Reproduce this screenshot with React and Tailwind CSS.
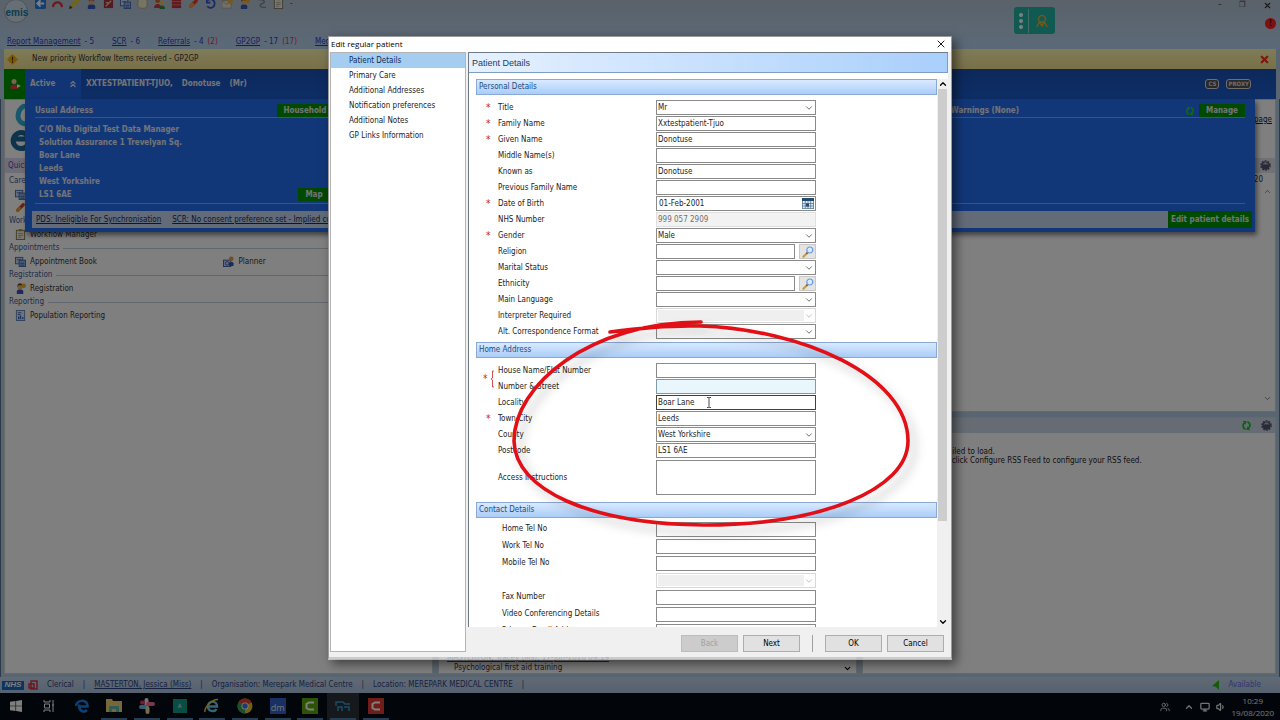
import React from "react";
import { ChevronDown, ChevronUp, ChevronsUp, X, Monitor, Volume1, Users } from "lucide-react";

const QUICK_LINKS = [
  { name: "Report Management", count: "5" },
  { name: "SCR", count: "6" },
  { name: "Referrals", count: "4", urgent: "(2)" },
  { name: "GP2GP", count: "17", urgent: "(17)" },
  { name: "Medicine Management", count: "2" },
];

const NAV = [
  "Patient Details",
  "Primary Care",
  "Additional Addresses",
  "Notification preferences",
  "Additional Notes",
  "GP Links Information",
];

const PERSONAL = [
  { id: "title", label: "Title", required: true, kind: "select", value: "Mr" },
  { id: "family", label: "Family Name", required: true, value: "Xxtestpatient-Tjuo" },
  { id: "given", label: "Given Name", required: true, value: "Donotuse" },
  { id: "middle", label: "Middle Name(s)", value: "" },
  { id: "known", label: "Known as", value: "Donotuse" },
  { id: "previous", label: "Previous Family Name", value: "" },
  { id: "dob", label: "Date of Birth", required: true, kind: "date", value: "01-Feb-2001" },
  { id: "nhs", label: "NHS Number", kind: "readonly", value: "999 057 2909" },
  { id: "gender", label: "Gender", required: true, kind: "select", value: "Male" },
  { id: "religion", label: "Religion", kind: "search", value: "" },
  { id: "marital", label: "Marital Status", kind: "select", value: "" },
  { id: "ethnicity", label: "Ethnicity", kind: "search", value: "" },
  { id: "language", label: "Main Language", kind: "select", value: "" },
  { id: "interpreter", label: "Interpreter Required", kind: "select", value: "", disabled: true },
  { id: "format", label: "Alt. Correspondence Format", kind: "select", value: "" },
];

const ADDRESS = [
  { id: "locality", label: "Locality", value: "Boar Lane", active: true },
  { id: "town", label: "Town City", required: true, value: "Leeds" },
  { id: "county", label: "County", kind: "select", value: "West Yorkshire" },
  { id: "postcode", label: "Postcode", value: "LS1 6AE" },
];

const CONTACT = [
  { id: "home-tel", label: "Home Tel No", value: "" },
  { id: "work-tel", label: "Work Tel No", value: "" },
  { id: "mobile-tel", label: "Mobile Tel No", value: "" },
  { id: "mobile-use", label: "", kind: "select", value: "", disabled: true },
  { id: "fax", label: "Fax Number", value: "" },
  { id: "video", label: "Video Conferencing Details", value: "" },
  { id: "email", label: "Primary Email Address", value: "" },
];

function CalendarIcon() {
  return (
    <svg viewBox="0 0 12 11" className="size-full">
      <rect x="0" y="0" width="12" height="11" fill="#dfe9f2" />
      <rect x="0" y="0" width="12" height="3" fill="#24496f" />
      <path d="M.5 3v8M3.3 3v8M6 3v8M8.7 3v8M11.5 3v8M0 5.5h12M0 8h12M0 10.6h12" stroke="#55789a" strokeWidth=".8" />
      <rect x="4" y="5.5" width="3" height="3" fill="#24496f" />
    </svg>
  );
}

function MagnifierIcon() {
  return (
    <svg viewBox="0 0 12 12" className="size-3">
      <path d="M1.4 10.8 5.2 7" stroke="#c79a4b" strokeWidth="2.2" strokeLinecap="round" />
      <path d="M4.4 7.8 5.6 6.6" stroke="#555f78" strokeWidth="1.6" />
      <circle cx="7.8" cy="4" r="3" fill="#d8ebff" stroke="#6d9bdc" strokeWidth="1.2" />
    </svg>
  );
}

function SyncIcon({ className }) {
  return (
    <svg viewBox="0 0 12 12" className={className}>
      <path d="M5 10C1.500 9 1.500 4.500 4 3M7 2c3.500 1 3.500 5.500 1 7" fill="none" stroke="currentColor" strokeWidth="2" />
      <path d="M2 .8 6.300 1.300 4.800 5.200zM10 11.200 5.700 10.700 7.200 6.800z" fill="currentColor" />
    </svg>
  );
}

function GearIcon() {
  return (
    <svg viewBox="0 0 12 12" className="size-[11px]">
      <circle cx="6" cy="6" r="4.500" fill="#50566c" />
      <circle cx="6" cy="6" r="5" fill="none" stroke="#50566c" strokeWidth="1.600" strokeDasharray="2 1.140" />
      <path d="M3.500 5c0-2 5-2 5 0M4.500 3v2M6 2.500V5M7.500 3v2" fill="none" stroke="#c8ccdc" strokeWidth=".8" />
    </svg>
  );
}

function SelectBox({ id, label, value, disabled }) {
  return (
    <div className={`relative h-[15px] w-40 border ${disabled ? "border-[#d8d8d8] bg-white p-px" : "border-[#8a8a8a] bg-white"}`}>
      <select
        id={id}
        aria-label={label || "Contact preference"}
        disabled={disabled}
        defaultValue={value}
        className={`block h-full appearance-none border-0 pl-px leading-3 text-[#222] outline-none ${disabled ? "w-[146px] bg-[#efefef]" : "w-full bg-transparent"}`}
      >
        <option value={value}>{value}</option>
      </select>
      <ChevronDown className={`pointer-events-none absolute right-px top-[2px] size-[10px] ${disabled ? "text-[#b5b5b5]" : "text-[#555]"}`} />
    </div>
  );
}

function Control({ field }) {
  const { id, label, kind, value, disabled, active, tint } = field;
  if (kind === "select") return <SelectBox id={id} label={label} value={value} disabled={disabled} />;
  if (kind === "search")
    return (
      <div className="flex h-[15px] w-40 justify-between">
        <input id={id} defaultValue={value} className="h-[15px] w-[139px] border border-[#8a8a8a] bg-white px-px outline-none" />
        <button type="button" aria-label={`Find ${label}`} className="flex h-[15px] w-[17px] items-center justify-center border border-[#c8c8c8] bg-[#e4e4e4]">
          <MagnifierIcon />
        </button>
      </div>
    );
  if (kind === "date")
    return (
      <div className="flex h-[15px] w-40 items-center border border-[#8a8a8a] bg-white pr-px">
        <input id={id} defaultValue={value} className="h-full min-w-0 flex-1 bg-transparent px-[2px] outline-none" />
        <button type="button" aria-label="Open calendar" className="h-[11px] w-3">
          <CalendarIcon />
        </button>
      </div>
    );
  const look =
    kind === "readonly"
      ? "border-[#e0e0e0] bg-[#f2f2f2] text-[#707070]"
      : tint
        ? "border-[#7f9aa8] bg-[#e9f7fd]"
        : active
          ? "border-[#404040] bg-white"
          : "border-[#8a8a8a] bg-white";
  return <input id={id} readOnly={kind === "readonly"} defaultValue={value} className={`block h-[15px] w-40 border px-px outline-none ${look}`} />;
}

function Row({ field }) {
  return (
    <div className="flex h-[15px] items-center">
      <span className="w-[22px] pl-[10px] text-[10px] leading-none text-[#c22]">{field.required ? "*" : ""}</span>
      <label htmlFor={field.id} className="w-[158px] whitespace-nowrap">
        {field.label}
      </label>
      <Control field={field} />
    </div>
  );
}

function SectionTitle({ children }) {
  return (
    <h3 className="flex h-4 items-center border border-[#8aa9d6] bg-linear-to-b from-[#d9eaff] to-[#aacdf8] px-[2px] text-[#1d4c7c]">
      {children}
    </h3>
  );
}

const RING =
  "M610 332C640 328 668 325 700 326C800 329 908 375 908 441C908 490 820 525 704 525C590 524 515 490 514 441C514 385 590 322 701 322";

function RingMark() {
  return (
    <svg viewBox="329 37 622 620" className="pointer-events-none absolute inset-0 size-full overflow-visible" fill="none" strokeLinecap="round" strokeLinejoin="round">
      <defs>
        <filter id="soft" x="-10%" y="-10%" width="125%" height="125%">
          <feGaussianBlur stdDeviation="5" />
        </filter>
      </defs>
      <path d={RING} stroke="#000" strokeOpacity=".14" strokeWidth="6" filter="url(#soft)" transform="translate(6 7)" />
      <path d={RING} stroke="#e21016" strokeWidth="3.600" />
    </svg>
  );
}

function Dialog() {
  return (
    <section
      role="dialog"
      aria-label="Edit regular patient"
      className="relative flex w-full max-w-[624px] flex-col border border-b-[3px] border-[#9a9a9a] border-b-white/60 bg-[#f0f0f0] bg-clip-padding pb-[5px] shadow-[4px_4px_10px_rgba(0,0,0,0.5)]"
    >
      <header className="flex h-[15px] shrink-0 items-center justify-between bg-white pb-[2px] pl-[2px] pr-1">
        <h1 className="font-['Open_Sans',sans-serif] text-black">Edit regular patient</h1>
        <button type="button" aria-label="Close" className="text-black">
          <X className="size-[12px]" strokeWidth={1.8} />
        </button>
      </header>
      <div className="flex min-h-0 flex-1 gap-[2px] pl-px pr-[3px]">
        <nav className="w-[136px] shrink-0 border border-[#b4b4b4] bg-white">
          <ul>
            {NAV.map((item, i) => (
              <li key={item}>
                <button
                  type="button"
                  className={`flex h-[15px] w-full items-center pl-[18px] ${i === 0 ? "bg-[#a5cdf0] text-[#0c2f5c]" : "text-[#222]"}`}
                >
                  {item}
                </button>
              </li>
            ))}
          </ul>
        </nav>
        <div className="flex min-w-0 flex-1 flex-col">
          <div className="flex min-h-0 flex-1 flex-col border-l border-t border-[#6f7a88] bg-white">
            <h2 className="flex h-5 shrink-0 items-center border-b border-r border-[#7f9cc4] bg-linear-to-r from-[#e6f1ff] to-[#a9cffc] px-[3px] font-['Liberation_Sans',sans-serif] text-[9px] text-[#1e3c64]">
              Patient Details
            </h2>
            <div className="flex min-h-0 flex-1 pt-[6px]">
              <form className="min-w-0 flex-1 overflow-hidden pl-[7px] text-[#222]">
                <SectionTitle>Personal Details</SectionTitle>
                <div className="flex flex-col gap-px pb-[3px] pt-[5px]">
                  {PERSONAL.map((f) => (
                    <Row key={f.id} field={f} />
                  ))}
                </div>
                <SectionTitle>Home Address</SectionTitle>
                <div className="flex flex-col gap-px pb-[7px] pt-[5px]">
                  <div className="flex">
                    <div className="flex w-[22px] items-center pl-[7px] text-[#c22]">
                      <span className="text-[10px] leading-none">*</span>
                      <svg viewBox="0 0 5 18" className="ml-[2px] h-[18px] w-[5px]" fill="none" stroke="#c22">
                        <path d="M4 1H2.5V8L1 9l1.500 1V17H4" strokeWidth=".8" />
                      </svg>
                    </div>
                    <div className="flex flex-col gap-px">
                      <div className="flex h-[15px] items-center">
                        <label htmlFor="house" className="w-[158px]">House Name/Flat Number</label>
                        <Control field={{ id: "house", value: "" }} />
                      </div>
                      <div className="flex h-[15px] items-center">
                        <label htmlFor="street" className="w-[158px]">Number &amp; Street</label>
                        <Control field={{ id: "street", value: "", tint: true }} />
                      </div>
                    </div>
                  </div>
                  {ADDRESS.map((f) => (
                    <Row key={f.id} field={f} />
                  ))}
                  <div className="flex items-center pl-[22px] pt-px">
                    <label htmlFor="access" className="w-[158px]">Access Instructions</label>
                    <textarea id="access" className="block h-[35px] w-40 resize-none border border-[#8a8a8a] bg-white outline-none" />
                  </div>
                </div>
                <SectionTitle>Contact Details</SectionTitle>
                <div className="flex flex-col gap-[2px] pt-1">
                  {CONTACT.map((f) => (
                    <div key={f.id} className="flex h-[15px] items-center pl-[26px]">
                      <label htmlFor={f.id} className="w-[154px] whitespace-nowrap pb-[2px]">{f.label}</label>
                      <Control field={f} />
                    </div>
                  ))}
                </div>
              </form>
              <div className="flex w-[11px] shrink-0 flex-col items-center bg-[#f0f0f0]">
                <ChevronUp className="size-[10px] shrink-0" strokeWidth={3} />
                <div className="h-[432px] w-[9px] bg-[#cdcdcd]" />
                <ChevronDown className="mt-auto size-[10px] shrink-0" strokeWidth={3} />
              </div>
            </div>
          </div>
          <footer className="flex h-[25px] shrink-0 items-end justify-end gap-[5px] pr-1 text-black">
            <button type="button" disabled className="h-[17px] w-[57px] border border-[#bdbdbd] bg-[#cccccc] text-[#a0a0a0]">Back</button>
            <button type="button" className="h-[17px] w-[57px] border border-[#adadad] bg-[#e1e1e1]">Next</button>
            <span className="mx-[7px] h-[17px] border-l border-[#a0a0a0]" />
            <button type="button" className="h-[17px] w-[57px] border border-[#adadad] bg-[#e1e1e1]">OK</button>
            <button type="button" className="h-[17px] w-[57px] border border-[#adadad] bg-[#e1e1e1]">Cancel</button>
          </footer>
        </div>
      </div>
      <RingMark />
      <svg viewBox="0 0 6 11" className="pointer-events-none absolute left-[377px] top-[360px] h-[11px] w-[6px]" fill="none" stroke="#333" strokeWidth=".9">
        <path d="M1 .5h1.500L3 1l.5-.5H5M3 1v9M1 10.500h1.500L3 10l.5.5H5" />
      </svg>
    </section>
  );
}

const ART = {
  back: (
    <>
      <rect width="12" height="12" rx="1.500" fill="#2b7de0" />
      <path d="M10 6H3M6 2.500 2.500 6 6 9.500" fill="none" stroke="#fff" strokeWidth="2" />
    </>
  ),
  arc: <path d="M1 10C2 3 10 3 11 10" fill="none" stroke="#d8343a" strokeWidth="2.500" />,
  pencil: (
    <>
      <path d="M9 0l3 3-8 8-4 1 1-4z" fill="#e8cc20" />
      <path d="M1 8l3 3-4 1z" fill="#444" />
    </>
  ),
  person: (
    <>
      <path d="M2 12V9c0-3 8-3 8 0v3z" fill="#3458b8" />
      <circle cx="6" cy="4" r="3" fill="#e8a878" />
      <path d="M3 4c0-5 6-5 6 0L8 2.500H4z" fill="#604028" />
    </>
  ),
  user: (
    <>
      <path d="M2 12V9c0-3 7-3 7 0v3z" fill="#3458b8" />
      <circle cx="5.500" cy="4" r="3" fill="#f0b070" />
      <path d="M2.500 4c0-5 6-5 6 0L7 2.500H4z" fill="#684020" />
      <circle cx="9.500" cy="3" r="2.500" fill="#f0b020" />
    </>
  ),
  book: (
    <>
      <rect x="1" y="1" width="10" height="10" fill="#a83058" />
      <path d="M3 9 9 3M3 5h3" stroke="#e8c860" strokeWidth="1.500" />
    </>
  ),
  screens: (
    <>
      <rect x=".5" y="1.500" width="8" height="7" fill="#c8dcf4" stroke="#4468b0" />
      <rect x="4.500" y="4.500" width="7" height="7" fill="#8cb0e4" stroke="#4468b0" />
      <path d="M2 4h5M6 8h4M6 10h4" stroke="#3458a0" strokeWidth=".8" />
    </>
  ),
  drum: <path d="M1 3c0-3 10-3 10 0v6c0 3-10 3-10 0z" fill="#ece8cc" stroke="#a89868" strokeWidth=".8" />,
  people: (
    <>
      <circle cx="4" cy="3" r="2.500" fill="#d06028" />
      <circle cx="9" cy="5" r="2.300" fill="#f0c040" />
      <path d="M0 11c0-6 8-6 8 0z" fill="#d03838" />
      <path d="M6 12c0-5 6-5 6 0z" fill="#308848" />
    </>
  ),
  grid: (
    <>
      <rect x="1" y="1" width="10" height="10" fill="#c03038" />
      <path d="M1 4h10M1 7.500h10" stroke="#e0a8a8" strokeWidth=".7" />
    </>
  ),
  pill: (
    <>
      <path d="M3 9 9 3" stroke="#e04020" strokeWidth="3.500" strokeLinecap="round" />
      <path d="M2.800 9.200 5 7" stroke="#e8a030" strokeWidth="3.500" strokeLinecap="round" />
    </>
  ),
  cycle: <path d="M3 2.500C6 0 11 2 10.500 6.500 10 11 5 12 2.500 9M2 1v4h4" fill="none" stroke="#3450c8" strokeWidth="1.800" />,
  clock: (
    <>
      <rect x="0" y="3" width="10" height="8" fill="#e8e0d0" stroke="#9a9480" strokeWidth=".7" />
      <path d="M0 3l5 4 5-4" fill="none" stroke="#9a9480" strokeWidth=".7" />
      <circle cx="9" cy="3.500" r="3" fill="#e8b040" />
    </>
  ),
  squiggle: <path d="M2 2c5-1 10 2 5 4s-2 5 4 4" fill="none" stroke="#808890" strokeWidth="1.500" />,
  clipboard: (
    <>
      <rect x="1.500" y="1.500" width="9" height="10" fill="#f4f0dc" stroke="#807850" />
      <path d="M4 0h4v2.500H4z" fill="#a89858" />
      <path d="M3.500 5h5M3.500 7h5M3.500 9h3" stroke="#9088a0" strokeWidth=".8" />
    </>
  ),
  planner: (
    <>
      <rect x=".5" y="4.500" width="8" height="7" fill="#c8dcf4" stroke="#3c5cb0" />
      <circle cx="4.500" cy="8" r="2" fill="none" stroke="#3c5cb0" />
      <circle cx="9" cy="3" r="2.500" fill="#f09838" />
      <path d="M6.500 11V8c0-2 5-2 5 0v3z" fill="#3458b8" />
    </>
  ),
  report: (
    <>
      <rect x="1.500" y=".5" width="9" height="11" fill="#dce8f8" stroke="#6480b8" />
      <path d="M3 3h4M3 5h3" stroke="#4060a0" />
      <path d="M4 10V7M6 10V6M8.500 10V7.500" stroke="#3068c0" strokeWidth="1.400" />
    </>
  ),
};

const TOOLBAR = ["back", "arc", "pencil", "person", "book", "screens", "drum", "people", "grid", "pill", "cycle", "clock", "user", "squiggle", "clipboard"];

function Glyph({ name }) {
  return (
    <svg viewBox="0 0 12 12" className="size-[11px] shrink-0">
      {ART[name]}
    </svg>
  );
}

function MenuGroup({ title, items }) {
  return (
    <section>
      <h3 className="flex h-[14px] items-center gap-1 text-[#3d5a94]">
        {title}
        <span className="flex-1 border-t border-[#c4cede]" />
      </h3>
      <ul className="grid grid-cols-2 pl-[6px]">
        {items.map((item) => (
          <li key={item.name} className="flex h-[13px] items-center gap-1 text-[#333]">
            <Glyph name={item.icon} />
            {item.name}
          </li>
        ))}
      </ul>
    </section>
  );
}

function GreenButton({ children, className }) {
  return (
    <button type="button" className={`bg-[#009400] font-bold text-[#e4e8f0] ${className}`}>
      {children}
    </button>
  );
}

function PatientBanner() {
  return (
    <div className="relative z-10 mx-1 flex h-[30px] shrink-0 bg-linear-to-b from-[#1a52b4] to-[#1c5cd0] text-[#e4e8f0]">
      <div className="flex w-[21px] items-center justify-center bg-[#009400]">
        <svg viewBox="0 0 12 12" className="size-3">
          <circle cx="5" cy="3.500" r="2.500" fill="#f0c8a0" />
          <path d="M1 11c0-6 8-6 8 0z" fill="#e04040" />
          <path d="M8 6l4 2-4 2z" fill="#fff" />
        </svg>
      </div>
      <div className="flex w-14 items-center justify-between bg-[#2068e8] pl-[5px] pr-[3px] font-bold">
        Active <ChevronsUp className="size-[10px]" strokeWidth={3} />
      </div>
      <div className="flex flex-1 items-center gap-[9px] pl-[5px] font-bold">
        <span>XXTESTPATIENT-TJUO,</span>
        <span>Donotuse</span>
        <span>(Mr)</span>
      </div>
      <div className="flex items-center gap-[7px] pr-[25px] text-[6px] font-bold leading-none text-[#ddd]">
        <span className="rounded-[3px] border border-[#ddd] bg-[#555] px-[2px] py-px">CS</span>
        <span className="rounded-[3px] border border-[#ddd] bg-[#555] px-px py-px">PROXY</span>
      </div>
      <div className="absolute left-[21px] right-[21px] top-full flex h-[133px] flex-col bg-[#246ef2] px-[7px] pb-[4px] shadow-[2px_3px_5px_rgba(0,0,0,0.5)]">
        <div className="mx-[3px] flex h-[19px] items-end border-b border-[#7ba6f0] leading-[13px]">
          <h2 className="w-[242px] font-bold">Usual Address</h2>
          <GreenButton className="h-[13px] w-[56px]">Household</GreenButton>
          <h2 className="ml-auto mr-[166px] font-bold">Warnings (None)</h2>
          <SyncIcon className="mb-px mr-1 size-[10px] text-[#20d020]" />
          <GreenButton className="h-[13px] w-[46px]">Manage</GreenButton>
        </div>
        <div className="mx-[3px] flex flex-1 items-end border-b border-[#7ba6f0] pb-[2px]">
          <address className="w-[263px] pl-1 font-bold not-italic leading-[13px]">
            C/O Nhs Digital Test Data Manager
            <br />
            Solution Assurance 1 Trevelyan Sq.
            <br />
            Boar Lane
            <br />
            Leeds
            <br />
            West Yorkshire
            <br />
            LS1 6AE
          </address>
          <GreenButton className="h-[13px] w-8">Map</GreenButton>
        </div>
        <div className="mt-[7px] flex h-[17px] items-center gap-[11px] bg-[#c6d6f2] pl-[4px] text-[#1c2c50]">
          <a href="#pds" className="underline">PDS: Ineligible For Synchronisation</a>
          <a href="#scr" className="underline">SCR: No consent preference set - Implied consent</a>
          <GreenButton className="-mr-1 ml-auto h-full w-[84px]">Edit patient details</GreenButton>
        </div>
      </div>
    </div>
  );
}

function Workspace() {
  return (
    <main className="flex min-h-0 flex-1 gap-[5px] border-x border-[#5f7590] px-[3px] pb-[3px]">
      <section className="flex min-w-0 flex-[429] flex-col border border-[#d0d0d0] bg-white">
        <div className="h-[58px] shrink-0 pl-[5px] pt-[4px]">
          <svg viewBox="0 0 50 50" className="size-[50px]" fill="none">
            <path d="M26 2A12 12 0 0 0 8 12c0 4 3 8 9 8" stroke="#30b0d8" strokeWidth="5" />
            <path d="M2 35h17a8 8 0 1 0-2 7" stroke="#186898" strokeWidth="5" />
          </svg>
        </div>
        <h2 className="flex h-[15px] shrink-0 items-center bg-[#dcd8ee] pl-[3px] text-[#5a48b0]">Quick Launch</h2>
        <div className="pl-[4px] pt-px">
          <MenuGroup title="Care Record" items={[{ name: "Consultations", icon: "screens" }, { name: "Tasks", icon: "person" }, { name: "Medication", icon: "pill" }]} />
          <MenuGroup title="Workflow" items={[{ name: "Workflow Manager", icon: "clipboard" }]} />
          <MenuGroup title="Appointments" items={[{ name: "Appointment Book", icon: "screens" }, { name: "Planner", icon: "planner" }]} />
          <MenuGroup title="Registration" items={[{ name: "Registration", icon: "user" }]} />
          <MenuGroup title="Reporting" items={[{ name: "Population Reporting", icon: "report" }]} />
        </div>
      </section>
      <section className="flex min-w-0 flex-[419] flex-col justify-end border border-[#d0d0d0] bg-white">
        <div className="flex items-end justify-between pr-[4px]">
          <div>
            <a href="#message" className="block pl-[8px] leading-[11px] text-[#2848a8] underline">MASTERTON, Tracey (Ms), 17-Jun-2020 09:19</a>
            <p className="pl-[15px] leading-[10px] text-[#333]">Psychological first aid training</p>
          </div>
          <ChevronDown className="size-[9px]" strokeWidth={3} />
        </div>
      </section>
      <section className="flex min-w-0 flex-[416] flex-col gap-[5px]">
        <div className="flex h-[313px] shrink-0 flex-col items-end border border-[#d0d0d0] bg-white pr-[3px]">
          <a href="#page" className="mt-[13px] leading-[13px] text-[#222] underline">Home page</a>
          <div className="-mr-[3px] mt-8 flex h-[15px] w-full items-center justify-end bg-[#dfe3ee] pr-1">
            <GearIcon />
          </div>
          <p className="pr-[9px] leading-[14px] text-[#333]">2020</p>
          <ChevronUp className="size-[9px] text-[#666]" />
          <ChevronDown className="mb-[8px] mt-auto size-[9px] text-[#666]" />
        </div>
        <div className="min-h-0 flex-1 border border-[#d0d0d0] bg-white">
          <div className="flex h-[15px] items-center justify-end gap-[9px] bg-[#ced8e8] pr-[3px]">
            <SyncIcon className="size-[11px] text-[#10c818]" />
            <GearIcon />
          </div>
          <p className="pl-[63px] pt-[14px] leading-[9px] text-[#222]">
            Feed failed to load.
            <br />
            Please click Configure RSS Feed to configure your RSS feed.
          </p>
        </div>
      </section>
    </main>
  );
}

function TaskTile({ label, children, running, selected }) {
  return (
    <button
      type="button"
      aria-label={label}
      className={`flex h-full items-center justify-center ${selected ? "bg-[#2c3238]" : ""}`}
    >
      <span className={`flex h-full w-[26px] items-center justify-center border-b-2 ${running ? "border-[#4d7ba8]" : "border-transparent"}`}>{children}</span>
    </button>
  );
}

function RecorderMark({ className }) {
  return (
    <span className={`flex size-4 items-center justify-center ${className}`}>
      <svg viewBox="0 0 10 10" className="size-[10px]" fill="none" stroke="#fff" strokeWidth="2">
        <path d="M9 1.500H4L1.500 3v4L4 8.500h5" />
      </svg>
    </span>
  );
}

function Taskbar() {
  return (
    <div className="flex h-[27px] shrink-0 items-stretch justify-between bg-[#040d16] text-[#e8e8e8]">
      <div className="grid w-[392px] grid-cols-12">
        <TaskTile label="Start">
          <svg viewBox="0 0 12 12" className="size-3" fill="#fff"><path d="M0 1.700 5.500 1v4.700H0zM6.100.9 12 0v5.700H6.100zM0 6.300h5.500V11L0 10.300zM6.100 6.300H12V12l-5.900-.9z" /></svg>
        </TaskTile>
        <TaskTile label="Task view">
          <svg viewBox="0 0 12 12" className="size-3" fill="none" stroke="#fff"><path d="M1 0v2h6V0M1 12v-2h6v2M1.500 4h5v4h-5zM10 0v12M9 5h2" /></svg>
        </TaskTile>
        <TaskTile label="Edge">
          <svg viewBox="0 0 14 14" className="size-[14px]" fill="none" stroke="#1a80e0" strokeWidth="2.600"><path d="M1 7C2 0 13 0 12.500 7.500H5M4.500 5.500C3 12 9 14 12 11" /></svg>
        </TaskTile>
        <TaskTile label="Files" running>
          <svg viewBox="0 0 16 13" className="h-[13px] w-4"><path d="M0 0h6l1 2h9v11H0z" fill="#f0d070" /><path d="M3 7h10v6H3z" fill="#60b8b0" /><path d="M6 10h4v3H6z" fill="#f0d070" /></svg>
        </TaskTile>
        <TaskTile label="Chat" running>
          <svg viewBox="0 0 16 16" className="size-4"><rect x="5.500" y="0" width="4" height="9" rx="2" fill="#f8e0e8" /><rect x="7" y="4" width="9" height="4" rx="2" fill="#f070a0" /><rect x="0" y="7" width="9" height="4" rx="2" fill="#60c0e8" /><rect x="6.500" y="8" width="4" height="8" rx="2" fill="#f0d8a0" /><rect x="1" y="2.500" width="5" height="4" rx="2" fill="#e83858" /></svg>
        </TaskTile>
        <TaskTile label="Assistant" running>
          <span className="flex size-[14px] items-center justify-center bg-[#109c88] text-[6px]">A</span>
        </TaskTile>
        <TaskTile label="Internet Explorer" running>
          <svg viewBox="0 0 16 16" className="size-4" fill="none"><path d="M4 8.500h9C13 2 4 2 4 8.500 4 14 11 14 12.500 11" stroke="#70c8f0" strokeWidth="2.400" /><path d="M1 14C0 10 8 1 14 1.500" stroke="#f0c830" strokeWidth="1.500" /></svg>
        </TaskTile>
        <TaskTile label="Chrome" running>
          <svg viewBox="0 0 16 16" className="size-4"><circle cx="8" cy="8" r="7.500" fill="#e8c020" /><path d="M1.500 4.300A7.500 7.500 0 0 1 14.500 4.300L8 8z" fill="#e04030" /><path d="M1.500 4.300A7.500 7.500 0 0 0 8 15.500L8 8z" fill="#30a050" /><circle cx="8" cy="8" r="3.500" fill="#fff" /><circle cx="8" cy="8" r="2.700" fill="#3878e0" /></svg>
        </TaskTile>
        <TaskTile label="Docman" running>
          <span className="flex size-4 items-end justify-center bg-[#3060c8] font-['Open_Sans',sans-serif] text-[9px] leading-[13px]">dm</span>
        </TaskTile>
        <TaskTile label="Editor" running>
          <RecorderMark className="bg-[#58a808]" />
        </TaskTile>
        <TaskTile label="EMIS Web" running selected>
          <svg viewBox="0 0 16 12" className="h-3 w-4" fill="none" stroke="#3898c8" strokeWidth="1.500"><path d="M1 6V2h7l2 2h5M3 11V7h4v4M9 7h5v4" /></svg>
        </TaskTile>
        <TaskTile label="Recorder" running>
          <RecorderMark className="bg-[#e03830]" />
        </TaskTile>
      </div>
      <div className="flex items-center gap-[6px] pr-[6px] font-['Open_Sans',sans-serif]">
        <Users className="mr-2 size-[10px]" />
        <ChevronUp className="size-[10px]" strokeWidth={3} />
        <Monitor className="size-[10px]" strokeWidth={3} />
        <Volume1 className="size-[10px]" strokeWidth={3} />
        <p className="text-center leading-3">10:29<br />19/08/2020</p>
      </div>
    </div>
  );
}

export default function App() {
  return (
    <div className="relative flex h-screen flex-col overflow-hidden bg-[#b4cbe4] font-['DejaVu_Sans_Condensed','DejaVu_Sans',sans-serif] text-[8px] leading-[10px]">
      <header className="flex h-[49px] shrink-0 flex-col bg-linear-to-b from-[#b4c4d4] to-[#b8d4f0]">
        <div className="flex h-[35px] shrink-0 items-start">
          <svg viewBox="0 0 26 24" className="ml-[3px] h-6 w-[26px]">
            <circle cx="13" cy="11" r="11.500" fill="#cfdde8" stroke="#93a9bd" />
            <text x="2.500" y="16" fontSize="10" fontWeight="bold" fill="#1878a0" fontFamily="Liberation Sans">emis</text>
          </svg>
          <div className="-mt-[2px] ml-[6px] flex items-center gap-[6px]">
            {TOOLBAR.map((name) => (
              <Glyph key={name} name={name} />
            ))}
            <span className="text-[#334]">-</span>
          </div>
          <div className="ml-auto mr-[159px] mt-[7px] flex h-[27px] w-[41px] items-center rounded-[3px] bg-[#20b4a4] text-white">
            <span className="flex w-[15px] flex-col items-center gap-[2px] border-r border-[#8cd8d0] py-1">
              <i className="size-[4px] rounded-full bg-white" />
              <i className="size-[4px] rounded-full bg-white" />
              <i className="size-[4px] rounded-full bg-white" />
            </span>
            <svg viewBox="0 0 14 14" className="mx-auto size-[14px]" fill="none" stroke="#e0b030" strokeWidth="1.500"><circle cx="7" cy="5" r="3.500" /><path d="M2 13c1-4 3-5 5-5s4 1 5 5M5 9l2 3 2-3" /></svg>
          </div>
          <div className="flex w-[66px] flex-col items-end gap-[8px] pr-1">
            <div className="flex w-full items-center justify-between pl-1 pr-1 text-[#333]">
              <span>–</span><span>❐</span><X className="size-[9px]" strokeWidth={3} />
            </div>
            <span className="flex size-[11px] items-center justify-center rounded-full bg-[#ff2020] font-bold text-[#601010]">!</span>
          </div>
        </div>
        <nav className="flex gap-[18px] pl-[7px] pt-[2px] text-[#3038c8]">
          {QUICK_LINKS.map((q) => (
            <span key={q.name} className="flex gap-1 whitespace-nowrap">
              <a href="#queue" className="underline">{q.name}</a>
              <span>- {q.count}</span>
              {q.urgent && <span className="text-[#e03050]">{q.urgent}</span>}
            </span>
          ))}
        </nav>
      </header>
      <div className="mx-1 flex h-5 shrink-0 items-center justify-between bg-linear-to-b from-[#fff8b0] to-[#f0e090] pl-[3px] pr-[6px] text-[#333]">
        <div className="flex items-center gap-[14px]">
          <svg viewBox="0 0 12 12" className="size-[11px]"><path d="M6 0l6 6-6 6-6-6z" fill="#f0b010" /><path d="M6 3v4M6 8v1.500" stroke="#503000" strokeWidth="1.200" /></svg>
          New priority Workflow Items received - GP2GP
        </div>
        <button type="button" aria-label="Dismiss" className="text-[#ff3020]"><X className="size-[11px]" strokeWidth={5} /></button>
      </div>
      <PatientBanner />
      <Workspace />
      <footer className="flex h-4 shrink-0 items-center justify-between bg-linear-to-b from-[#c4d6ea] to-[#aac2de] px-[2px] text-[#2c4480]">
        <div className="flex items-center gap-[9px] whitespace-nowrap">
          <div className="flex items-center gap-1">
            <span className="flex h-[9px] w-[22px] items-center justify-center bg-[#1868c0] font-['Liberation_Sans',sans-serif] font-bold italic text-white">NHS</span>
            <svg viewBox="0 0 10 10" className="size-[10px]" fill="none" stroke="#d83040" strokeWidth="1.500"><path d="M3 1h6v8H3zM1 4h5v4H1z" /></svg>
          </div>
          <span>Clerical</span><span>|</span>
          <a href="#user" className="underline">MASTERTON, Jessica (Miss)</a><span>|</span>
          <span>Organisation: Merepark Medical Centre</span><span>|</span>
          <span>Location: MEREPARK MEDICAL CENTRE</span><span>|</span>
        </div>
        <div className="flex items-center gap-2 pr-[17px] text-[#5a70d8]">
          <svg viewBox="0 0 8 10" className="h-[10px] w-2" fill="#28b818"><path d="M7 0v10L4 7 0 6z" /></svg>
          Available
        </div>
      </footer>
      <Taskbar />
      <div className="absolute inset-0 z-20 flex justify-center bg-black/50 pb-[60px] pt-9">
        <Dialog />
      </div>
    </div>
  );
}
